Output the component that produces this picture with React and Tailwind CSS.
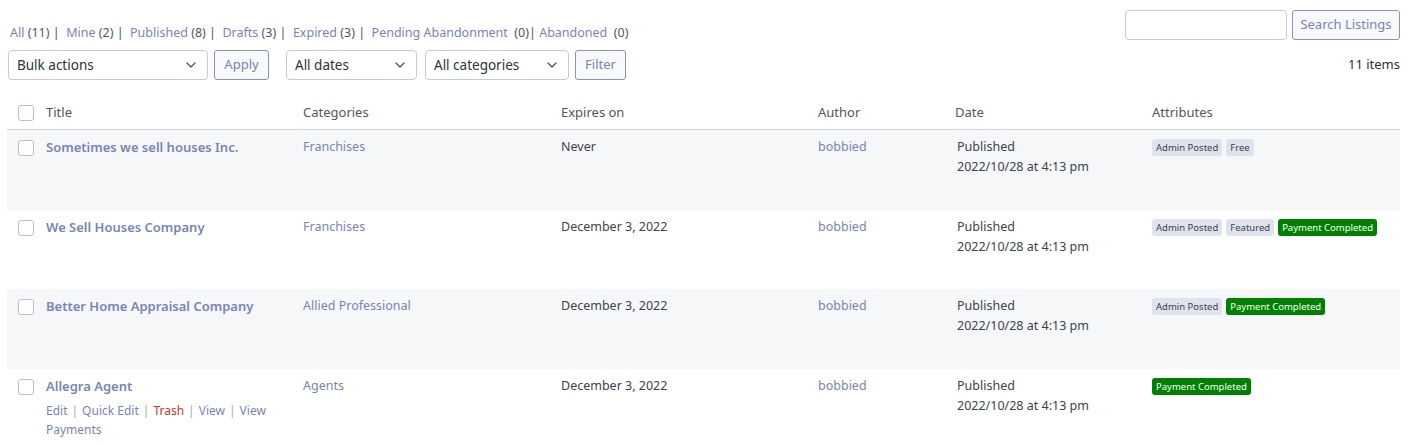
import React from 'react';
import { ChevronDown } from 'lucide-react';

const statuses = [
  { label: 'All', count: '(11)' },
  { label: 'Mine', count: '(2)' },
  { label: 'Published', count: '(8)' },
  { label: 'Drafts', count: '(3)' },
  { label: 'Expired', count: '(3)' },
  { label: 'Pending Abandonment', count: ' (0)' },
  { label: 'Abandoned', count: ' (0)' },
];

const rows = [
  {
    title: 'Sometimes we sell houses Inc.',
    category: 'Franchises',
    expires: 'Never',
    badges: [{ t: 'Admin Posted' }, { t: 'Free' }],
  },
  {
    title: 'We Sell Houses Company',
    category: 'Franchises',
    expires: 'December 3, 2022',
    badges: [{ t: 'Admin Posted' }, { t: 'Featured' }, { t: 'Payment Completed', green: true }],
  },
  {
    title: 'Better Home Appraisal Company',
    category: 'Allied Professional',
    expires: 'December 3, 2022',
    badges: [{ t: 'Admin Posted' }, { t: 'Payment Completed', green: true }],
  },
  {
    title: 'Allegra Agent',
    category: 'Agents',
    expires: 'December 3, 2022',
    badges: [{ t: 'Payment Completed', green: true }],
    actions: true,
  },
];

const cols = 'grid grid-cols-[39px_257px_258px_257px_137px_197px_1fr]';

const Checkbox = () => (
  <span className="block w-4 h-4 border border-[#b9bfcc] rounded-[3px] bg-white" />
);

const Select = ({ label, w }) => (
  <div className={`${w} h-[30px] flex items-center justify-between pl-2 pr-2 border border-[#c5cad6] rounded-[4px] bg-white text-[13.5px] text-[#2c3338]`}>
    <span>{label}</span>
    <ChevronDown className="w-4 h-4 text-[#50575e]" strokeWidth={2} />
  </div>
);

const Button = ({ children, w }) => (
  <button className={`${w} h-[30px] border border-[#8a93b8] rounded-[3px] bg-[#f8f9fa] text-[13px] text-[#7a84b4]`}>
    {children}
  </button>
);

const Sep = () => <span className="text-[#a7aab0]">|</span>;

const App = () => {
  return (
    <div className="w-[1412px] h-[446px] overflow-hidden bg-white text-[12.5px] text-[#2c3338]" style={{ fontFamily: '"Noto Sans", "Liberation Sans", sans-serif' }}>
      <div className="pt-[10px] pl-[8px] pr-[12px]">
        <div className="flex justify-between items-end">
          <div className="pl-[2px] translate-y-[3px] flex text-[12.5px] leading-[20px] text-[#50575e] whitespace-pre">
            {statuses.map((s, i) => (
              <span key={s.label}>
                <span className="text-[#7a84b4]">{s.label}</span>
                <span>{s.count.startsWith(' ') ? '  ' + s.count.trim() : ' ' + s.count}</span>
                {i < statuses.length - 1 && <span className="text-[#50575e]">{i === 5 ? '| ' : ' |  '}</span>}
              </span>
            ))}
          </div>
          <div className="flex gap-[5px]">
            <input className="w-[162px] h-[30px] border border-[#c5cad6] rounded-[4px] bg-white" />
            <Button w="w-[108px]">Search Listings</Button>
          </div>
        </div>

        <div className="mt-[10px] flex items-center justify-between">
          <div className="flex items-center">
            <Select label="Bulk actions" w="w-[200px]" />
            <div className="ml-[6px]">
              <Button w="w-[55px]">Apply</Button>
            </div>
            <div className="ml-[17px]">
              <Select label="All dates" w="w-[131px]" />
            </div>
            <div className="ml-[8px]">
              <Select label="All categories" w="w-[144px]" />
            </div>
            <div className="ml-[6px]">
              <Button w="w-[51px]">Filter</Button>
            </div>
          </div>
          <span className="text-[13px] text-[#2c3338]">11 items</span>
        </div>
      </div>

      <div className="mt-[16px] ml-[7px] mr-[12px]">
        <div className={`${cols} h-[34px] items-center border-b border-[#cfd2da] text-[13px] text-[#50575e]`}>
          <div className="pl-[11px]"><Checkbox /></div>
          <div>Title</div>
          <div>Categories</div>
          <div>Expires on</div>
          <div>Author</div>
          <div>Date</div>
          <div>Attributes</div>
        </div>

        {rows.map((r, i) => (
          <div key={r.title} className={`${cols} h-[79.5px] pt-[7px] leading-[20px] ${i % 2 === 0 ? 'bg-[#f6f7f9]' : 'bg-white'}`}>
            <div className="pl-[11px] pt-[3px]"><Checkbox /></div>
            <div className="pr-[10px]">
              <div className="font-semibold text-[13px] text-[#7a84b4]">{r.title}</div>
              {r.actions && (
                <div className="mt-[5px] w-[226px] flex flex-wrap gap-x-[4px] leading-[19px] text-[12px] text-[#7a84b4]">
                  <span>Edit</span>
                  <Sep />
                  <span>Quick Edit</span>
                  <Sep />
                  <span className="text-[#c0392b]">Trash</span>
                  <Sep />
                  <span>View</span>
                  <Sep />
                  <span>View</span>
                  <span>Payments</span>
                </div>
              )}
            </div>
            <div className="text-[#7a84b4]">{r.category}</div>
            <div className="text-[#3c434a]">{r.expires}</div>
            <div className="text-[#7a84b4]">bobbied</div>
            <div className="pl-[2px] text-[#3c434a]">
              <div>Published</div>
              <div>2022/10/28 at 4:13 pm</div>
            </div>
            <div className="flex gap-[4px] pt-[2px] items-start">
              {r.badges.map((b) => (
                <span
                  key={b.t}
                  className={`h-[17px] px-[4px] rounded-[3px] text-[9.5px] leading-[17px] ${b.green ? 'bg-[#008000] text-white' : 'bg-[#dfe3ee] text-[#3c434a]'}`}
                >
                  {b.t}
                </span>
              ))}
            </div>
          </div>
        ))}
      </div>
    </div>
  );
};

export default App;
